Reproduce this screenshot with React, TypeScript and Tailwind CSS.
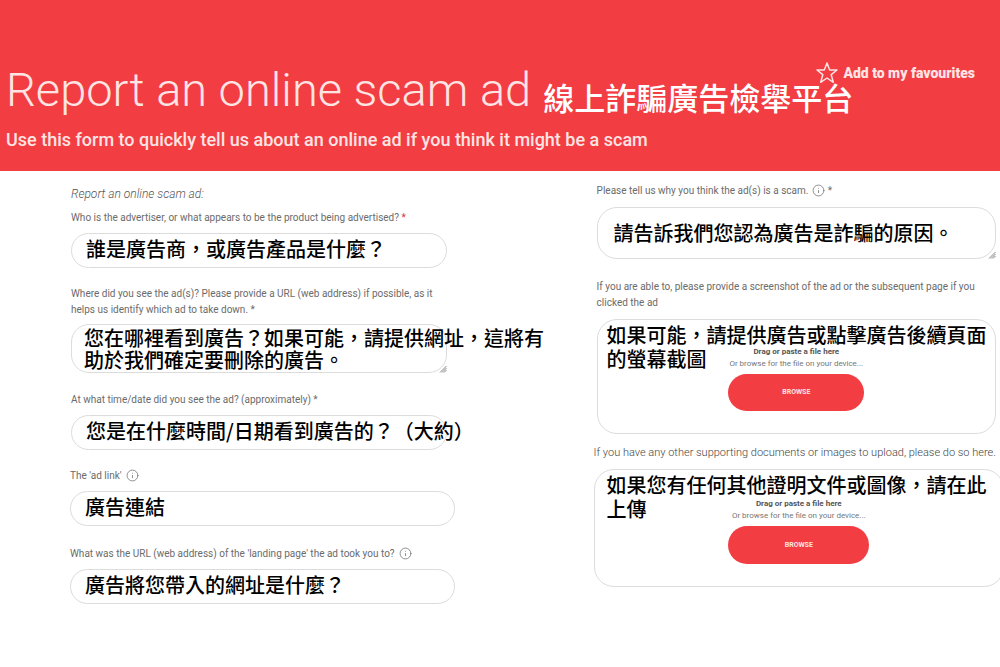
import type { ReactNode } from "react";
import { Info } from "lucide-react";

const cjk = "font-['Noto_Sans_CJK_TC','Noto_Sans_CJK_SC',sans-serif]";

function InfoIcon() {
  return (
    <Info
      className="ml-1 inline-block size-[13px] align-[-3px] text-[#777]"
      strokeWidth={1.5}
      aria-hidden="true"
    />
  );
}

function Translation({ className, children }: { className: string; children: ReactNode }) {
  return (
    <p
      lang="zh-Hant"
      className={`pointer-events-none absolute whitespace-nowrap text-[20px] font-medium text-black ${cjk} ${className}`}
    >
      {children}
    </p>
  );
}

function Grip() {
  return (
    <svg
      className="pointer-events-none absolute right-0 bottom-0 size-2 text-[#888]"
      viewBox="0 0 8 8"
      fill="none"
      stroke="currentColor"
      aria-hidden="true"
    >
      <path d="M1 7.5 7.5 1M3 7.5 7.5 3M5 7.5 7.5 5" />
    </svg>
  );
}

type FieldProps = {
  id: string;
  label: ReactNode;
  translation: ReactNode;
  className?: string;
};

const labelStyle = "block text-[10px] leading-4 text-[#6b6b6b]";

function TextField({ id, label, translation, className = "" }: FieldProps) {
  return (
    <div className={className}>
      <label htmlFor={id} className={labelStyle}>
        {label}
      </label>
      <div className="relative mt-[7px]">
        <input
          id={id}
          type="text"
          className="block h-[35px] w-full rounded-full border border-[#dcdcdc] bg-white px-4 text-sm"
        />
        <Translation className="top-0 left-[15px] leading-8">{translation}</Translation>
      </div>
    </div>
  );
}

function UploadBox({
  id,
  translation,
  button,
  className = "",
}: {
  id: string;
  translation: ReactNode;
  button: string;
  className?: string;
}) {
  return (
    <div
      className={`relative flex flex-col items-center rounded-[20px] border border-[#dcdcdc] bg-white ${className}`}
    >
      <strong className="text-[8px] leading-3 font-bold text-[#555]">Drag or paste a file here</strong>
      <span className="text-[8px] leading-3 text-[#777]">Or browse for the file on your device...</span>
      <button
        type="button"
        aria-labelledby={id}
        className={`mt-1 rounded-full bg-[#f23d43] text-[7px] font-bold text-[#ffe4e4] ${button}`}
      >
        BROWSE
      </button>
      {translation}
    </div>
  );
}

export default function App() {
  return (
    <div className="min-h-screen overflow-x-clip bg-white font-[Roboto,sans-serif]">
      <header className="relative bg-[#f23d43] px-[6px] pt-[60px] pb-[19px] text-white">
        <div className="flex items-baseline gap-3">
          <h1 className="text-[47px] leading-[60px] font-light whitespace-nowrap text-[#ffe4e4]">
            Report an online scam ad
          </h1>
          <p
            lang="zh-Hant"
            className={`relative top-1 text-[31px] leading-[40px] font-medium whitespace-nowrap ${cjk}`}
          >
            線上詐騙廣告檢舉平台
          </p>
        </div>
        <p className="mt-2 text-[18px] leading-6 font-medium text-[#ffe4e4]">
          Use this form to quickly tell us about an online ad if you think it might be a scam
        </p>
        <button
          type="button"
          className="absolute top-[61px] right-[25px] flex items-center gap-1 text-[14px] leading-6 font-black text-[#ffe4e4]"
        >
          <svg
            className="size-6"
            viewBox="0 0 24 24"
            fill="none"
            stroke="currentColor"
            strokeWidth="1.5"
            strokeLinejoin="round"
            aria-hidden="true"
          >
            <path d="M12 2 14.7 9H22l-5.8 4.7 2.1 7.6L12 17l-6.3 4.3 2.1-7.6L2 9h7.3Z" />
          </svg>
          Add to my favourites
        </button>
      </header>

      <main className="flex justify-between pl-[70px]">
        <form className="w-[41.4%] pt-[15px]">
          <div className="mr-2 ml-px">
            <h2 className="text-[12px] leading-4 font-light text-[#555] italic">Report an online scam ad:</h2>
            <TextField
              id="advertiser"
              className="mt-2"
              label={
                <>
                  Who is the advertiser, or what appears to be the product being advertised?{" "}
                  <span className="text-[#d33]">*</span>
                </>
              }
              translation="誰是廣告商，或廣告產品是什麼？"
            />
            <div className="mt-[18px]">
              <label htmlFor="where" className={labelStyle}>
                Where did you see the ad(s)? Please provide a URL (web address) if possible, as it
                <br />
                helps us identify which ad to take down. *
              </label>
              <div className="relative mt-[6px]">
                <textarea
                  id="where"
                  className="block h-[49px] w-full resize-none rounded-[18px] border border-[#dcdcdc] px-4"
                />
                <Translation className="top-[3px] left-[13px] leading-[22px]">
                  您在哪裡看到廣告？如果可能，請提供網址，這將有
                  <br />
                  助於我們確定要刪除的廣告。
                </Translation>
                <Grip />
              </div>
            </div>
            <TextField
              id="when"
              className="mt-[19px]"
              label="At what time/date did you see the ad? (approximately) *"
              translation="您是在什麼時間/日期看到廣告的？（大約）"
            />
          </div>
          <TextField
            id="link"
            className="mt-[18px]"
            label={
              <>
                The 'ad link'
                <InfoIcon />
              </>
            }
            translation="廣告連結"
          />
          <TextField
            id="landing"
            className="mt-5"
            label={
              <>
                What was the URL (web address) of the 'landing page' the ad took you to?
                <InfoIcon />
              </>
            }
            translation="廣告將您帶入的網址是什麼？"
          />
        </form>

        <section className="w-[43.7%] pt-3">
          <div className="mr-1 ml-[3px]">
            <label htmlFor="why" className={labelStyle}>
              Please tell us why you think the ad(s) is a scam.
              <InfoIcon /> *
            </label>
            <div className="relative mt-2">
              <textarea
                id="why"
                className="block h-[52px] w-full resize-none rounded-[20px] border border-[#dcdcdc] px-4"
              />
              <Translation className="top-0 left-[17px] leading-[52px]">
                請告訴我們您認為廣告是詐騙的原因。
              </Translation>
              <Grip />
            </div>
            <h3 id="screenshot" className={`mt-5 ${labelStyle}`}>
              If you are able to, please provide a screenshot of the ad or the subsequent page if you
              <br />
              clicked the ad
            </h3>
            <UploadBox
              id="screenshot"
              className="mt-2 h-[115px] pt-[26px]"
              button="h-[37px] w-[136px]"
              translation={
                <Translation className="top-[3px] left-[9px] leading-6">
                  如果可能，請提供廣告或點擊廣告後續頁面
                  <br />
                  的螢幕截圖
                </Translation>
              }
            />
          </div>
          <h3 id="documents" className="mt-[11px] text-[11px] leading-4 font-light whitespace-nowrap text-[#444]">
            If you have any other supporting documents or images to upload, please do so here.
          </h3>
          <UploadBox
            id="documents"
            className="-mr-1 mt-2 h-[118px] pt-7"
            button="h-[38px] w-[141px]"
            translation={
              <Translation className="top-[3px] left-3 leading-6">
                如果您有任何其他證明文件或圖像，請在此
                <br />
                上傳
              </Translation>
            }
          />
        </section>
      </main>
    </div>
  );
}
